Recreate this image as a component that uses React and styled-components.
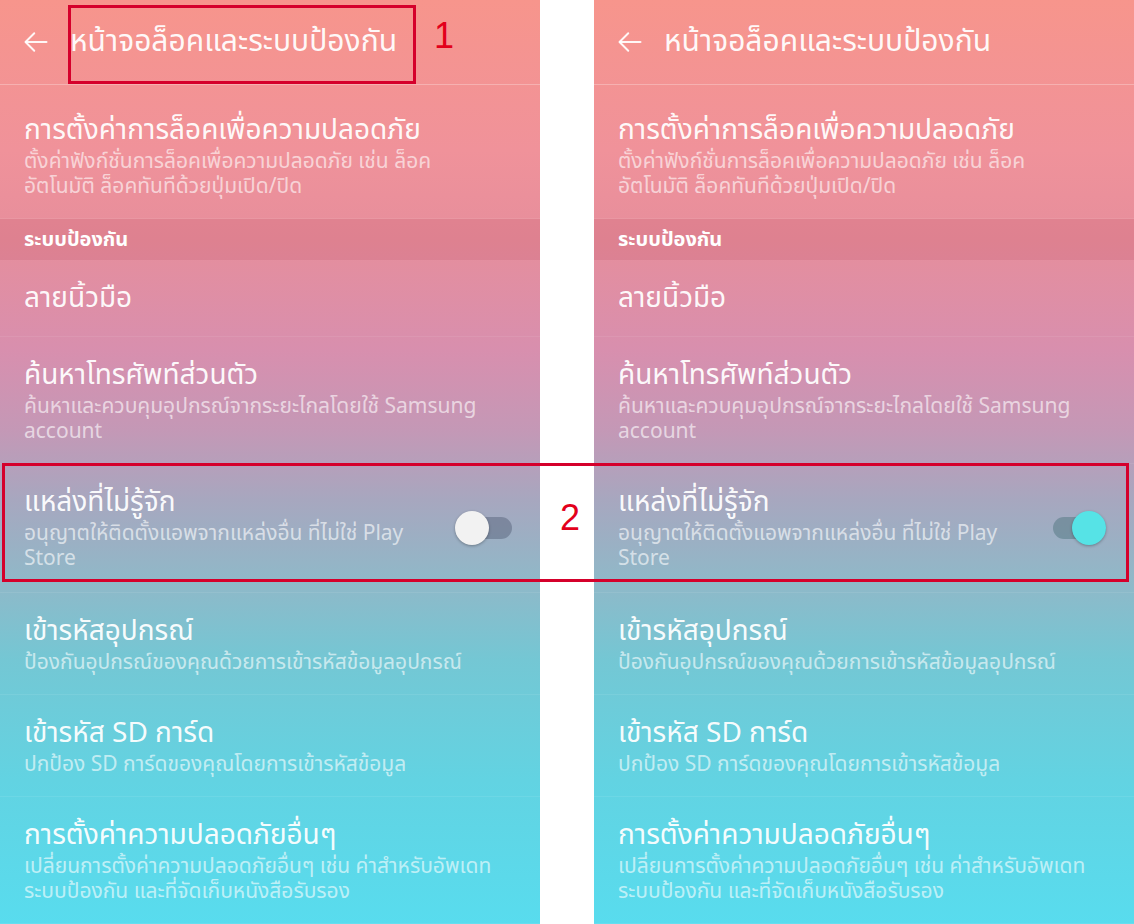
import React from 'react'
import styled, { createGlobalStyle } from 'styled-components'

const GlobalStyle = createGlobalStyle`
  html, body {
    margin: 0;
    padding: 0;
    background: #fff;
  }
  body {
    font-family: "Noto Sans Thai", "Noto Sans", Roboto, "DejaVu Sans", sans-serif;
  }
`

const items = [
  { title: 'ลายนิ้วมือ' },
  {
    title: 'ค้นหาโทรศัพท์ส่วนตัว',
    sub: 'ค้นหาและควบคุมอุปกรณ์จากระยะไกลโดยใช้ Samsung account',
  },
  {
    title: 'แหล่งที่ไม่รู้จัก',
    sub: 'อนุญาตให้ติดตั้งแอพจากแหล่งอื่น ที่ไม่ใช่ Play Store',
    toggle: true,
  },
  {
    title: 'เข้ารหัสอุปกรณ์',
    sub: 'ป้องกันอุปกรณ์ของคุณด้วยการเข้ารหัสข้อมูลอุปกรณ์',
  },
  {
    title: 'เข้ารหัส SD การ์ด',
    sub: 'ปกป้อง SD การ์ดของคุณโดยการเข้ารหัสข้อมูล',
  },
  {
    title: 'การตั้งค่าความปลอดภัยอื่นๆ',
    sub: 'เปลี่ยนการตั้งค่าความปลอดภัยอื่นๆ เช่น ค่าสำหรับอัพเดท ระบบป้องกัน และที่จัดเก็บหนังสือรับรอง',
  },
]

function BackArrow() {
  return (
    <svg width="28" height="28" viewBox="0 0 24 24" fill="none" stroke="rgba(255,255,255,0.92)" strokeWidth="1.7" strokeLinecap="round" strokeLinejoin="round">
      <path d="M21 12H3.5" />
      <path d="M10.5 4.5L3 12l7.5 7.5" />
    </svg>
  )
}

function Phone({ on }) {
  return (
    <Panel>
      <Header>
        <BackArrow />
        <HeaderTitle>หน้าจอล็อคและระบบป้องกัน</HeaderTitle>
      </Header>
      <Item first>
        <Texts>
          <Title>การตั้งค่าการล็อคเพื่อความปลอดภัย</Title>
          <Sub>ตั้งค่าฟังก์ชั่นการล็อคเพื่อความปลอดภัย เช่น ล็อค<br />อัตโนมัติ ล็อคทันทีด้วยปุ่มเปิด/ปิด</Sub>
        </Texts>
      </Item>
      <Section>ระบบป้องกัน</Section>
      {items.map((it, i) => (
        <Item key={i} tall={it.toggle}>
          <Texts>
            <Title>{it.title}</Title>
            {it.sub && <Sub>{it.sub}</Sub>}
          </Texts>
          {it.toggle && (
            <Switch>
              <Track on={on} />
              <Thumb on={on} />
            </Switch>
          )}
        </Item>
      ))}
    </Panel>
  )
}

export default function App() {
  return (
    <>
      <GlobalStyle />
      <Page>
        <Phone on={false} />
        <Gap />
        <Phone on={true} />
        <Box1 />
        <Num1>1</Num1>
        <Box2 />
        <Num2>2</Num2>
      </Page>
    </>
  )
}

const Page = styled.div`
  position: relative;
  display: flex;
  width: 1134px;
  height: 924px;
  overflow: hidden;
`

const Gap = styled.div`
  width: 54px;
  flex: none;
  background: #fff;
`

const Panel = styled.div`
  width: 540px;
  flex: none;
  display: flex;
  flex-direction: column;
  background: linear-gradient(
    180deg,
    #f7958c 0px,
    #f0929a 150px,
    #e68e9c 240px,
    #d88fae 350px,
    #c498b6 430px,
    #a7a7bf 500px,
    #90b8c8 580px,
    #74c7d4 660px,
    #62d3e2 780px,
    #58dcee 924px
  );
  color: #fff;
`

const Header = styled.div`
  height: 84px;
  display: flex;
  align-items: center;
  gap: 20px;
  padding: 0 0 0 22px;
  border-bottom: 1px solid rgba(255, 255, 255, 0.28);
  flex: none;
`

const HeaderTitle = styled.div`
  font-size: 30px;
  line-height: 36px;
  color: rgba(255, 255, 255, 0.95);
`

const Item = styled.div`
  display: flex;
  align-items: center;
  padding: ${p => (p.first ? '28px' : '21px')} 28px ${p => (p.tall ? '21px' : '19px')} 24px;
  border-bottom: 1px solid rgba(255, 255, 255, 0.08);
  flex: none;
`

const Texts = styled.div`
  flex: 1;
  min-width: 0;
`

const Title = styled.div`
  font-size: 28px;
  line-height: 36px;
  color: rgba(255, 255, 255, 0.96);
`

const Sub = styled.div`
  font-size: 21px;
  line-height: 25px;
  color: rgba(255, 255, 255, 0.62);
`

const Section = styled.div`
  height: 41px;
  display: flex;
  align-items: center;
  padding: 0 24px;
  font-size: 20px;
  font-weight: 700;
  background: rgba(170, 50, 70, 0.13);
  flex: none;
`

const Switch = styled.div`
  position: relative;
  width: 57px;
  height: 34px;
  flex: none;
  margin-left: 20px;
`

const Track = styled.div`
  position: absolute;
  left: 4px;
  right: 0;
  top: 6px;
  height: 22px;
  border-radius: 11px;
  background: ${p => (p.on ? 'rgba(70, 110, 120, 0.45)' : 'rgba(80, 90, 115, 0.45)')};
`

const Thumb = styled.div`
  position: absolute;
  top: 0;
  left: ${p => (p.on ? '23px' : '0')};
  width: 34px;
  height: 34px;
  border-radius: 50%;
  background: ${p => (p.on ? '#56e3e6' : '#f2f2f2')};
  box-shadow: 0 1px 3px rgba(0, 0, 0, 0.3);
`

const Box1 = styled.div`
  position: absolute;
  left: 68px;
  top: 5px;
  width: 348px;
  height: 79px;
  box-sizing: border-box;
  border: 3px solid #d5002b;
`

const Box2 = styled.div`
  position: absolute;
  left: 2px;
  top: 463px;
  width: 1127px;
  height: 119px;
  box-sizing: border-box;
  border: 3px solid #d5002b;
`

const Num = styled.div`
  position: absolute;
  font-family: "Liberation Sans", Arial, sans-serif;
  font-size: 36px;
  line-height: 36px;
  color: #e3001b;
`

const Num1 = styled(Num)`
  left: 434px;
  top: 18px;
`

const Num2 = styled(Num)`
  left: 560px;
  top: 500px;
`
